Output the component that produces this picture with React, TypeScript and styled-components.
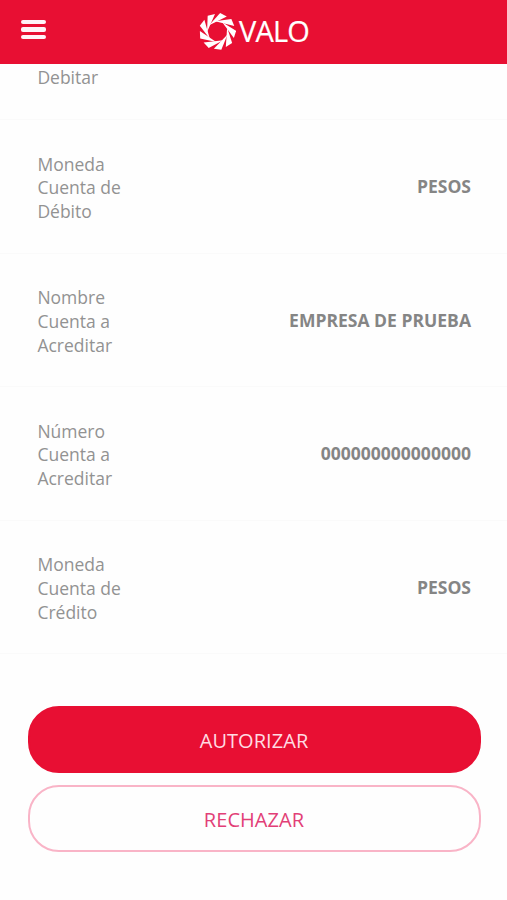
import React from "react";
import styled, { createGlobalStyle } from "styled-components";

const GlobalStyle = createGlobalStyle`
  * { box-sizing: border-box; }
  body {
    margin: 0;
    background: #fefefe;
    font-family: "Open Sans", "Noto Sans", sans-serif;
  }
`;

const Screen = styled.div`
  width: 100%;
  height: 900px;
  overflow: hidden;
  display: flex;
  flex-direction: column;
`;

const Header = styled.header`
  flex: none;
  height: 64px;
  padding: 0 21px;
  display: grid;
  grid-template-columns: 26px 1fr 26px;
  align-items: center;
  background: #e80f33;
  color: #fff;
`;

const MenuButton = styled.button`
  display: flex;
  flex-direction: column;
  gap: 3.4px;
  width: 25px;
  padding: 0;
  margin-top: -5px;
  border: 0;
  background: none;
`;

const MenuBar = styled.span`
  height: 4.2px;
  border-radius: 2px;
  background: #fff3f8;
`;

const Brand = styled.div`
  display: flex;
  align-items: center;
  justify-content: center;
  gap: 3px;
  margin: -2px 0 0 1px;
`;

const BrandName = styled.span`
  font-size: 29px;
  line-height: 38px;
  letter-spacing: -0.8px;
  -webkit-text-stroke: 0.2px #fff;
`;

const Details = styled.dl`
  flex: none;
  height: 590px;
  margin: 0;
  display: flex;
  flex-direction: column;
`;

const Row = styled.div<{ $partial?: boolean }>`
  flex: none;
  height: ${(p) => (p.$partial ? "56px" : "133.5px")};
  padding: ${(p) => (p.$partial ? "2px" : "4px")} 36px 0 37.4px;
  display: flex;
  align-items: ${(p) => (p.$partial ? "flex-start" : "center")};
  justify-content: space-between;
  border-bottom: 1px solid #fafafa;
`;

const Label = styled.dt`
  width: 92px;
  color: #929292;
  font-size: 17.5px;
  line-height: 23.7px;
`;

const Value = styled.dd`
  margin: 0 0 4px;
  color: #858585;
  font-size: 17.55px;
  font-weight: 700;
  line-height: 24px;
  white-space: nowrap;
`;

const Actions = styled.div`
  display: flex;
  flex-direction: column;
  gap: 12px;
  padding: 52px 26.5px 0 27.5px;
`;

const ActionButton = styled.button<{ $primary?: boolean }>`
  height: 67px;
  padding: 2px 0 0;
  border: 2px solid ${(p) => (p.$primary ? "#e80f33" : "#f9b4c7")};
  border-radius: 31px;
  background: ${(p) => (p.$primary ? "#e80f33" : "#fefefe")};
  color: ${(p) => (p.$primary ? "#ffdbe2" : "#e23f77")};
  font: 400 20px/28px "Open Sans", sans-serif;
  letter-spacing: 0.05px;
`;

const BLADES = Array.from({ length: 9 }, (_, i) => i * 40 + 2);

function Logo() {
  return (
    <svg width="37" height="37" viewBox="-18.5 -18.5 37 37" fill="#fff" aria-hidden="true">
      {BLADES.map((angle) => (
        <path key={angle} d="M-8.6 -6 L2 -18.5 L8.8 -15.3 Z" transform={`rotate(${angle})`} />
      ))}
    </svg>
  );
}

const ROWS = [
  { label: ["Debitar"], value: "", partial: true },
  { label: ["Moneda", "Cuenta de", "Débito"], value: "PESOS" },
  { label: ["Nombre", "Cuenta a", "Acreditar"], value: "EMPRESA DE PRUEBA" },
  { label: ["Número", "Cuenta a", "Acreditar"], value: "000000000000000" },
  { label: ["Moneda", "Cuenta de", "Crédito"], value: "PESOS" },
];

export default function App() {
  return (
    <>
      <GlobalStyle />
      <Screen>
        <Header>
          <MenuButton aria-label="Menú">
            <MenuBar />
            <MenuBar />
            <MenuBar />
          </MenuButton>
          <Brand>
            <Logo />
            <BrandName>VALO</BrandName>
          </Brand>
        </Header>
        <Details>
          {ROWS.map((row, i) => (
            <Row key={i} $partial={row.partial}>
              <Label>
                {row.label.map((line) => (
                  <React.Fragment key={line}>
                    {line}
                    <br />
                  </React.Fragment>
                ))}
              </Label>
              {row.value && <Value>{row.value}</Value>}
            </Row>
          ))}
        </Details>
        <Actions>
          <ActionButton $primary>AUTORIZAR</ActionButton>
          <ActionButton>RECHAZAR</ActionButton>
        </Actions>
      </Screen>
    </>
  );
}
